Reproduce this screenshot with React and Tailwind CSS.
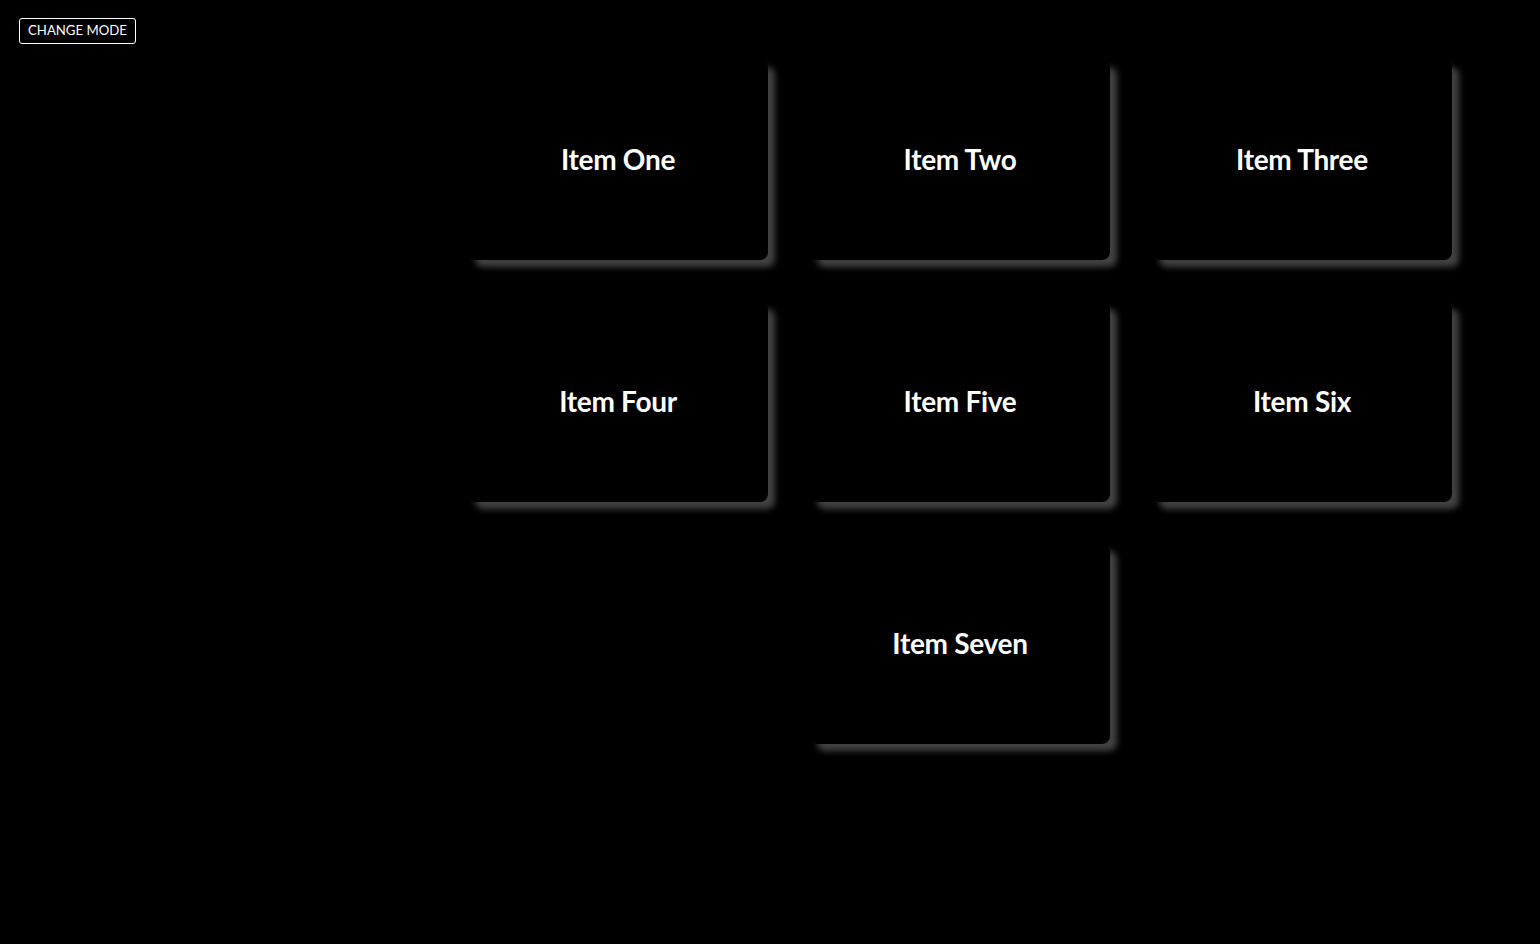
import React from "react";

const items = ["Item One", "Item Two", "Item Three", "Item Four", "Item Five", "Item Six"];

function Card({ label, extra = "" }) {
  return (
    <div
      className={`w-[300px] h-[200px] bg-black rounded-[8px] flex items-center justify-center shadow-[7px_7px_6px_rgba(66,66,66,1)] ${extra}`}
    >
      <span className="text-white text-[28px] font-bold tracking-[-0.3px] -mt-[3px]" style={{ fontFamily: "Lato, 'Open Sans', sans-serif" }}>
        {label}
      </span>
    </div>
  );
}

export default function App() {
  return (
    <div className="min-h-screen w-full bg-black" style={{ fontFamily: "Lato, 'Open Sans', sans-serif" }}>
      <div className="flex pt-[18px] pl-[19px]">
        <button className="h-[26px] px-[8px] border border-white rounded-[3px] text-white text-[13.2px] leading-none bg-black">
          CHANGE MODE
        </button>
      </div>
      <div className="ml-[468px] mt-[16px] grid grid-cols-[300px_300px_300px] gap-x-[42px] gap-y-[42px]">
        {items.map((t) => (
          <Card key={t} label={t} />
        ))}
        <Card label="Item Seven" extra="col-start-2" />
      </div>
    </div>
  );
}
